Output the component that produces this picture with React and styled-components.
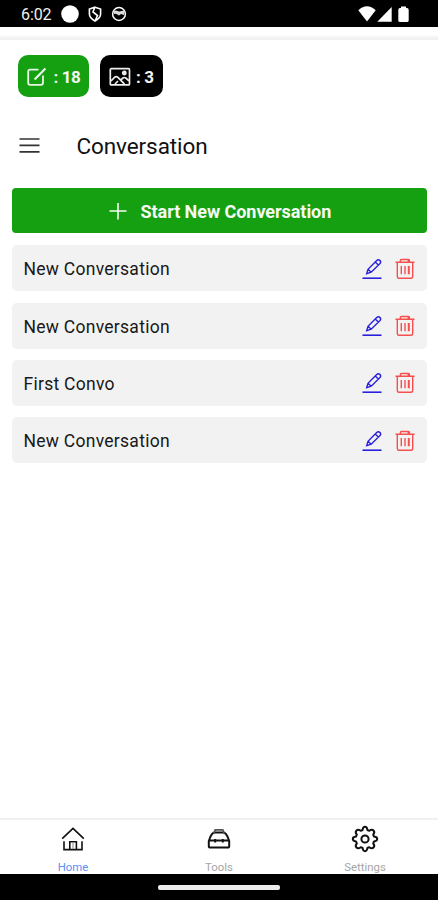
import React from "react";
import styled, { createGlobalStyle } from "styled-components";

const GlobalStyle = createGlobalStyle`
  * { box-sizing: border-box; }
  body { margin: 0; background: #fff; font-family: Roboto, "Liberation Sans", sans-serif; }
  button { font-family: inherit; border: 0; padding: 0; background: none; }
`;

const Screen = styled.div`
  width: 438px;
  height: 900px;
  display: flex;
  flex-direction: column;
  background: #fff;
  overflow: hidden;
`;

const StatusBar = styled.header`
  height: 27px;
  flex: none;
  display: flex;
  align-items: center;
  justify-content: space-between;
  padding: 1px 29px 0 21px;
  background: #000;
  color: #fff;
`;

const Clock = styled.span`
  width: 40px;
  padding-top: 1px;
  font-size: 16px;
  line-height: 20px;
  letter-spacing: -0.1px;
  color: #f0f0f0;
`;

const StatusGroup = styled.div`
  display: flex;
  align-items: center;
`;

const Icon = styled.svg`
  display: block;
  flex: none;
  width: ${(p) => p.$w}px;
  height: ${(p) => p.$h}px;
  margin-left: ${(p) => p.$gap || 0}px;
  fill: none;
  stroke: ${(p) => p.$color || "currentColor"};
  stroke-width: ${(p) => p.$stroke || 1.4};
`;

const HeaderEdge = styled.div`
  height: 13px;
  flex: none;
  background: linear-gradient(#fff 60%, #f3f3f3 80%, #f1f1f1);
`;

const Badges = styled.div`
  display: flex;
  gap: 11px;
  padding: 15px 17.5px 0;
`;

const Badge = styled.div`
  width: ${(p) => p.$width}px;
  height: 42px;
  display: flex;
  align-items: center;
  padding: 1px 0 0 9px;
  border-radius: 10px;
  background: ${(p) => p.$bg};
  color: #fff;
`;

const BadgeText = styled.span`
  margin-left: ${(p) => p.$gap}px;
  font-size: 17px;
  line-height: 20px;
  font-weight: 700;
  letter-spacing: -0.4px;
  white-space: pre;
  color: #f2f5f1;
`;

const TitleBar = styled.div`
  height: 91px;
  flex: none;
  display: flex;
  align-items: center;
  padding: 7px 19px 0;
`;

const Title = styled.h1`
  margin: 0 0 0 36.5px;
  font-size: 22.5px;
  line-height: 28px;
  font-weight: 400;
  letter-spacing: -0.1px;
  color: #111;
`;

const Content = styled.main`
  flex: 1;
  display: flex;
  flex-direction: column;
  padding: 0 11px 0 12px;
`;

const StartButton = styled.button`
  height: 45px;
  flex: none;
  display: flex;
  align-items: center;
  padding: 2px 0 0 97px;
  border-radius: 4px;
  background: #14a010;
  color: #f5faf4;
`;

const StartLabel = styled.span`
  margin-left: 13.5px;
  font-size: 18px;
  line-height: 22px;
  font-weight: 700;
  letter-spacing: -0.05px;
  white-space: nowrap;
`;

const List = styled.div`
  display: flex;
  flex-direction: column;
  gap: 11.3px;
  margin-top: 12.3px;
`;

const Row = styled.div`
  height: 46px;
  display: flex;
  align-items: center;
  padding: 1px 12px 0 11.5px;
  border-radius: 5px;
  background: #f2f2f2;
`;

const RowLabel = styled.span`
  flex: 1;
  padding-top: 1px;
  font-size: 17.5px;
  line-height: 22px;
  letter-spacing: 0.27px;
  color: #181818;
`;

const TabBar = styled.nav`
  height: 56px;
  flex: none;
  display: grid;
  grid-template-columns: repeat(3, 1fr);
  border-top: 2px solid #f0f0f0;
`;

const Tab = styled.div`
  display: flex;
  flex-direction: column;
  align-items: center;
  color: #111;
`;

const TabIcon = styled.div`
  height: 37px;
  display: flex;
  align-items: center;
  justify-content: center;
`;

const TabLabel = styled.span`
  margin-top: 2.5px;
  font-size: 11.4px;
  line-height: 14px;
  color: ${(p) => (p.$active ? "#5b8ff5" : "#a6a6a6")};
`;

const GestureBar = styled.div`
  height: 26px;
  flex: none;
  display: flex;
  justify-content: center;
  padding-top: 10.5px;
  background: #000;
`;

const GestureHandle = styled.div`
  width: 122px;
  height: 5px;
  border-radius: 2px;
  background: #ececec;
`;

const ComposeIcon = () => (
  <Icon $w={20} $h={20} $stroke={1.8} $color="#e6f5e4" viewBox="0 0 20 20">
    <path d="M11.5 2.6H3.1Q1.2 2.6 1.2 4.6V15.8Q1.2 17.8 3.1 17.8H14Q16 17.8 16 15.8V8.5" />
    <path strokeWidth="2.2" d="M7.6 12.5L18.4 1.5" />
  </Icon>
);

const PictureIcon = () => (
  <Icon $w={22} $h={20} $stroke={1.7} $color="#eee" viewBox="0 0 22 20">
    <rect x="1.3" y="1.7" width="19.2" height="16.2" rx="1" />
    <circle cx="15.3" cy="6" r="1.6" fill="#ddd" />
    <path d="M2 14L6 10Q7.3 9 8.7 10.2L15.5 17.2M11.5 13.2L14 11Q15.4 10 16.8 11L20 13.8M6 17L9 14" />
  </Icon>
);

const PencilIcon = () => (
  <Icon $w={20} $h={22} $stroke={1.4} $color="#2a20dc" viewBox="0 0 20 22">
    <path strokeWidth="1.6" d="M0.5 20.2H19.5" />
    <path d="M4.7 15.6L6 11.3L14.7 2.6Q16.2 1.2 17.8 2.4Q19.4 3.8 18 5.5L9.2 14.2ZM6 11.3L9.2 14.2M13.2 4.1L16.4 7.1" />
  </Icon>
);

const TrashIcon = () => (
  <Icon $w={20} $h={22} $gap={13} $stroke={1.4} $color="#f5504f" viewBox="0 0 20 22">
    <path d="M0.5 4.2H19.5M2.3 4.5V18.4Q2.3 20.2 4 20.2H16Q17.7 20.2 17.7 18.4V4.5M5.4 4V2.5Q5.4 1.5 6.4 1.5H13.4Q14.4 1.5 14.4 2.5V4M6.3 8V16.3M10 8V16.3" />
    <path strokeWidth="2" d="M13.8 8V16.3M13.6 1.3V4" />
  </Icon>
);

const HomeIcon = () => (
  <Icon $w={24} $h={26} $stroke={1.6} viewBox="0 0 24 26">
    <path d="M1.2 12.7L12 2.3L22.8 12.7M3 15.2V23.6H21V15.2M8.8 23V15.7H15.4V23" />
    <path stroke="#888" strokeWidth="1" d="M12 17V23" />
  </Icon>
);

const ToolsIcon = () => (
  <Icon $w={24} $h={24} $stroke={2} viewBox="0 0 24 24">
    <path d="M1.8 14L3.3 10Q5.2 5.4 8 5.4H16Q18.8 5.4 20.7 10L22.2 14V19Q22.2 20.6 20.6 20.6H3.4Q1.8 20.6 1.8 19ZM1.8 13.5H22.2M8.2 12V15.5M15.8 12V15.5" />
    <path stroke="#555" strokeWidth="1.7" d="M6.8 6.5L8.2 2.8H15.8L17.2 6.5" />
  </Icon>
);

const SettingsIcon = () => (
  <Icon $w={28} $h={28} $stroke={2} viewBox="0 0 28 28">
    <circle cx="14" cy="14" r="3.6" />
    <path strokeLinejoin="round" d="M11.6 5Q12 1.8 14 1.8Q16 1.8 16.4 5L18.3 5.8Q20.9 3.8 22.5 5.5Q24.2 7.1 22.2 9.7L23 11.6Q26.2 12 26.2 14Q26.2 16 23 16.4L22.2 18.3Q24.2 20.9 22.5 22.5Q20.9 24.2 18.3 22.2L16.4 23Q16 26.2 14 26.2Q12 26.2 11.6 23L9.7 22.2Q7.1 24.2 5.5 22.5Q3.8 20.9 5.8 18.3L5 16.4Q1.8 16 1.8 14Q1.8 12 5 11.6L5.8 9.7Q3.8 7.1 5.5 5.5Q7.1 3.8 9.7 5.8Z" />
  </Icon>
);

const MenuIcon = () => (
  <Icon $w={21} $h={18} $stroke={1.7} $color="#333" viewBox="0 0 21 18">
    <path d="M0.5 2H20.5M0.5 8.4H20.5M0.5 14.8H20.5" />
  </Icon>
);

const conversations = ["New Conversation", "New Conversation", "First Convo", "New Conversation"];

const tabs = [
  { label: "Home", icon: HomeIcon, active: true },
  { label: "Tools", icon: ToolsIcon },
  { label: "Settings", icon: SettingsIcon },
];

export default function App() {
  return (
    <Screen>
      <GlobalStyle />
      <StatusBar>
        <StatusGroup>
          <Clock>6:02</Clock>
          <Icon $w={18} $h={18} viewBox="0 0 18 18">
            <circle cx="9" cy="9" r="8.8" fill="#fff" stroke="none" />
          </Icon>
          <Icon $w={14} $h={16} $gap={9} $stroke={1.6} viewBox="0 0 14 16">
            <path d="M7 1.2L12.6 3V8Q12.6 12 7 15Q1.4 12 1.4 8V3ZM6.5 2L5 6L9.5 9.5L7.5 14" />
          </Icon>
          <Icon $w={16} $h={16} $gap={9} $stroke={1.5} viewBox="0 0 16 16">
            <circle cx="8" cy="8" r="6.4" />
            <path fill="#ddd" stroke="none" d="M2.5 5.2L5 4.5L8 5.5L13.5 4.5L13 9L10 8L8 9.5L5 7.8L3 8Z" />
          </Icon>
        </StatusGroup>
        <StatusGroup>
          <Icon $w={18} $h={16} viewBox="0 0 18 16">
            <path fill="#fff" stroke="none" d="M0.3 4.2Q9-3.6 17.7 4.2L9 15.5Z" />
          </Icon>
          <Icon $w={15} $h={16} $gap={1} viewBox="0 0 15 16">
            <path fill="#fff" stroke="none" d="M14.7 1V15.7H0.3Z" />
          </Icon>
          <Icon $w={11} $h={17} $gap={6} viewBox="0 0 11 17">
            <path fill="#fff" stroke="none" d="M3 0.5H8V2H9Q10.7 2 10.7 4V14.5Q10.7 16 9 16H2Q0.3 16 0.3 14.5V4Q0.3 2 2 2H3Z" />
          </Icon>
        </StatusGroup>
      </StatusBar>
      <HeaderEdge />
      <Badges>
        <Badge $width={71.5} $bg="#14a010">
          <ComposeIcon />
          <BadgeText $gap={7}>: 18</BadgeText>
        </Badge>
        <Badge $width={62.5} $bg="#000">
          <PictureIcon />
          <BadgeText $gap={5}>: 3</BadgeText>
        </Badge>
      </Badges>
      <TitleBar>
        <MenuIcon />
        <Title>Conversation</Title>
      </TitleBar>
      <Content>
        <StartButton>
          <Icon $w={18} $h={18} $stroke={1.6} viewBox="0 0 18 18">
            <path d="M0.5 8H17.5M9 -0.5V16.5" />
          </Icon>
          <StartLabel>Start New Conversation</StartLabel>
        </StartButton>
        <List>
          {conversations.map((name, index) => (
            <Row key={index}>
              <RowLabel>{name}</RowLabel>
              <PencilIcon />
              <TrashIcon />
            </Row>
          ))}
        </List>
      </Content>
      <TabBar>
        {tabs.map(({ label, icon: Glyph, active }) => (
          <Tab key={label}>
            <TabIcon>
              <Glyph />
            </TabIcon>
            <TabLabel $active={active}>{label}</TabLabel>
          </Tab>
        ))}
      </TabBar>
      <GestureBar>
        <GestureHandle />
      </GestureBar>
    </Screen>
  );
}
